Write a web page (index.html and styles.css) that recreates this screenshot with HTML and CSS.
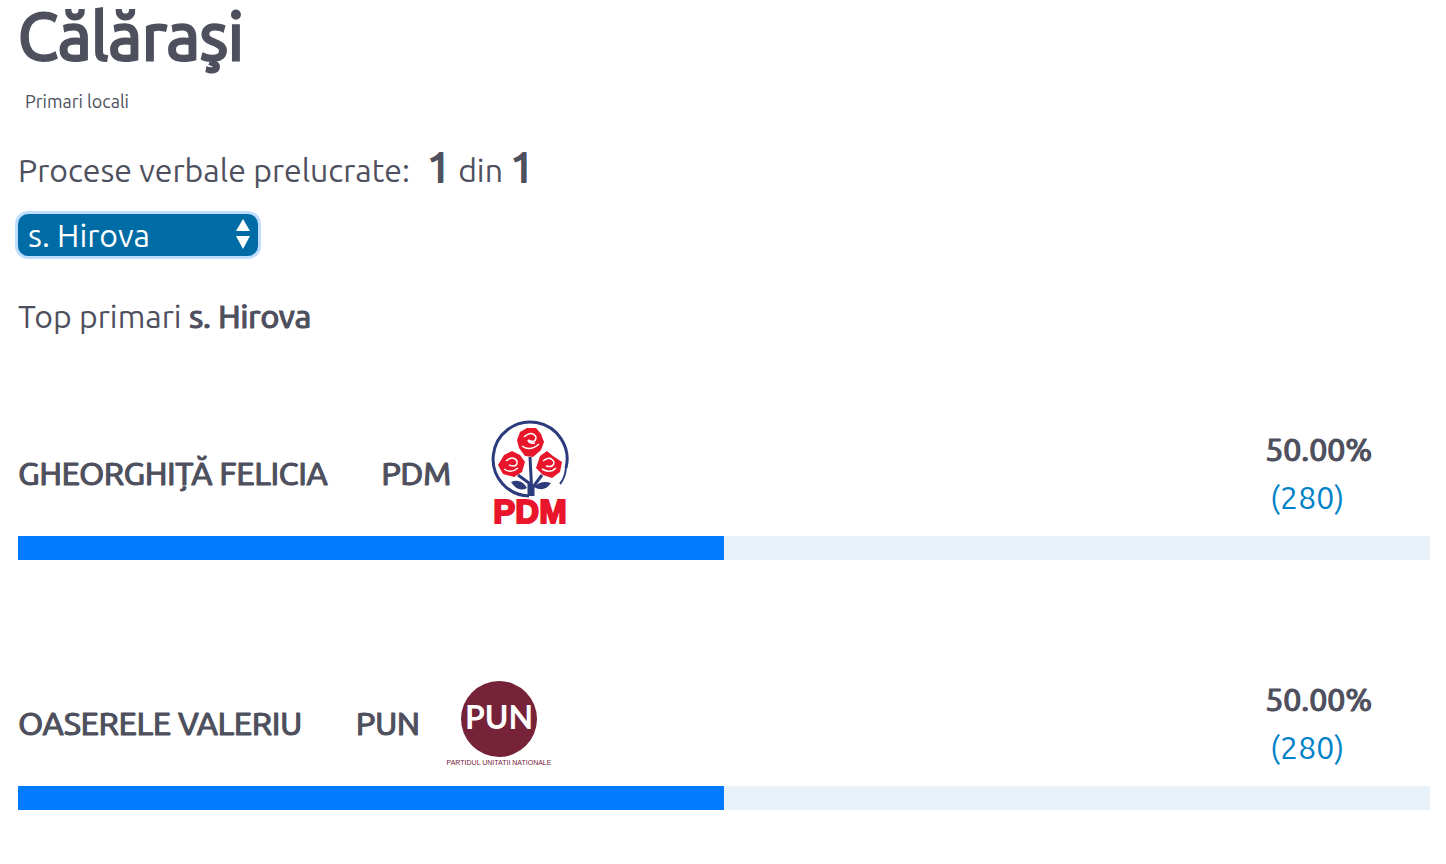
FILE: index.html
```html
<!DOCTYPE html>
<html>
<head>
    <meta charset="utf-8" />
    <meta name="viewport" content="width=device-width, initial-scale=1" />
    <title>Călăraşi</title>
    <link rel="stylesheet" href="styles.css">
</head>
<body>
    <main class="results">
        <h1 class="region">Călăraşi</h1>
        <p class="kind">Primari locali</p>
        <p class="processed">Procese verbale prelucrate: <b class="first">1</b> din <b>1</b></p>

        <div class="picker">
            <select class="locality" aria-label="Localitate">
                <option>s. Hirova</option>
            </select>
            <svg class="arrows" width="14" height="30" viewBox="0 0 14 30" aria-hidden="true">
                <path d="M7 0L14 12H0zM0 17H14L7 30z" fill="#fff" />
            </svg>
        </div>

        <h2 class="top">Top primari <b>s. Hirova</b></h2>

        <section class="candidate">
            <div class="row">
                <span class="name">GHEORGHIȚĂ FELICIA</span>
                <span class="party">PDM</span>
                <svg class="logo" viewBox="0 -2 110 110" role="img" aria-label="PDM">
                    <g fill="none" stroke="#2c3b7c">
                        <path d="M54 76A37 37 0 1 1 91 48" stroke-width="3" />
                        <path d="M91 48Q90 58 85 64" stroke-width="2" />
                        <path d="M55 37L57 76M54 76V63L43 55M58 76V67L67 55" stroke-width="3" />
                    </g>
                    <path d="M36 62Q46 58 52 68Q43 73 36 62zM59 67Q66 60 76 63Q69 73 59 67z" fill="#2c3b7c" />
                    <g fill="#e8152b">
                        <path d="M45 12L52 8L61 8L66 14L69 22L66 30L58 37L50 36L44 28L42 20z" />
                        <path d="M29 35L37 31L45 35L50 42L47 52L39 57L28 54L23 45z" />
                        <path d="M65 36L72 31L78 36L87 42L85 52L77 58L68 55L61 48z" />
                    </g>
                    <g fill="none" stroke="#fff" stroke-width="1.5">
                        <path d="M49 17Q57 10 61 17Q61 24 53 20M47 26Q55 32 64 24M53 20Q54 24 60 23" />
                        <path d="M31 41Q38 35 42 41Q43 48 34 45M29 49Q36 54 43 48" />
                        <path d="M68 41Q75 35 79 42Q79 48 71 46M67 49Q75 54 81 48" />
                    </g>
                    <text class="pdm" x="55" y="103">PDM</text>
                </svg>
                <div class="votes">
                    <b class="percent">50.00%</b>
                    <span class="count">(280)</span>
                </div>
            </div>
            <div class="bar"><div class="fill" style="width: 50%"></div></div>
        </section>

        <section class="candidate">
            <div class="row">
                <span class="name">OASERELE VALERIU</span>
                <span class="party">PUN</span>
                <svg class="logo" viewBox="0 0 110 110" role="img" aria-label="PUN">
                    <circle cx="55" cy="51" r="38" fill="#76233a" />
                    <text class="pun" x="55" y="61">PUN</text>
                    <text class="motto" x="55" y="97">PARTIDUL UNITATII NATIONALE</text>
                </svg>
                <div class="votes">
                    <b class="percent">50.00%</b>
                    <span class="count">(280)</span>
                </div>
            </div>
            <div class="bar"><div class="fill" style="width: 50%"></div></div>
        </section>
    </main>
</body>
</html>
```

FILE: styles.css
```css
body {
  margin: 0;
  background: #fff;
  color: #4e505e;
  font-family: Ubuntu, "Noto Sans", sans-serif;
  font-size: 32px;
  line-height: 48px;
}

/* regular cut with a heavier outline instead of the bold cut */
b,
.region,
.name,
.party {
  font-weight: 400;
  -webkit-text-stroke: 1px currentColor;
  text-shadow: 1px 0 currentColor;
}

.results {
  padding: 0 16px 0 18px;
}

.region {
  margin: 0;
  font-size: 65px;
  line-height: 72px;
  -webkit-text-stroke-width: 3px;
}

.kind {
  margin: 17px 7px 0;
  font-size: 18px;
  line-height: 24px;
}

.processed {
  margin: 30px 0 0;
}

.processed b {
  font-size: 42px;
  -webkit-text-stroke-width: 2px;
}

.processed .first {
  margin-left: 10px;
}

.picker {
  position: relative;
  width: 240px;
  margin-top: 20px;
}

.locality {
  display: block;
  width: 100%;
  height: 42px;
  padding: 0 32px 0 10px;
  border: 0;
  border-radius: 10px;
  outline: 0;
  box-shadow: 0 0 0 3px #bfdeff;
  background: #006ca5;
  color: #fff;
  font: inherit;
  line-height: 42px;
  appearance: none;
}

.arrows {
  position: absolute;
  top: 5px;
  right: 8px;
  pointer-events: none;
}

.top {
  margin: 36px 0 78px;
  font-size: 32px;
  font-weight: 400;
}

.candidate {
  margin-bottom: 108px;
}

.candidate:last-child {
  margin-bottom: 54px;
}

.row {
  display: flex;
  align-items: center;
  margin-bottom: 8px;
}

.party {
  margin: 0 24px 0 54px;
}

.logo {
  width: 110px;
  height: 110px;
  overflow: visible;
}

.votes {
  width: 165px;
  margin-left: auto;
}

.percent,
.count {
  display: block;
}

.count {
  padding-left: 5px;
  color: #0082c8;
}

.bar {
  height: 24px;
  background: #e9f1f9;
}

.fill {
  height: 100%;
  background: #007bff;
}

.pdm,
.pun,
.motto {
  font-family: "Liberation Sans", sans-serif;
  font-weight: 700;
  text-anchor: middle;
}

.pdm {
  fill: #e8152b;
  stroke: #e8152b;
  stroke-width: 2px;
  font-size: 33px;
}

.pun {
  fill: #fff;
  font-family: Lato, sans-serif;
  font-size: 32px;
}

.motto {
  fill: #76233a;
  font-size: 7px;
  font-weight: 400;
}
```
